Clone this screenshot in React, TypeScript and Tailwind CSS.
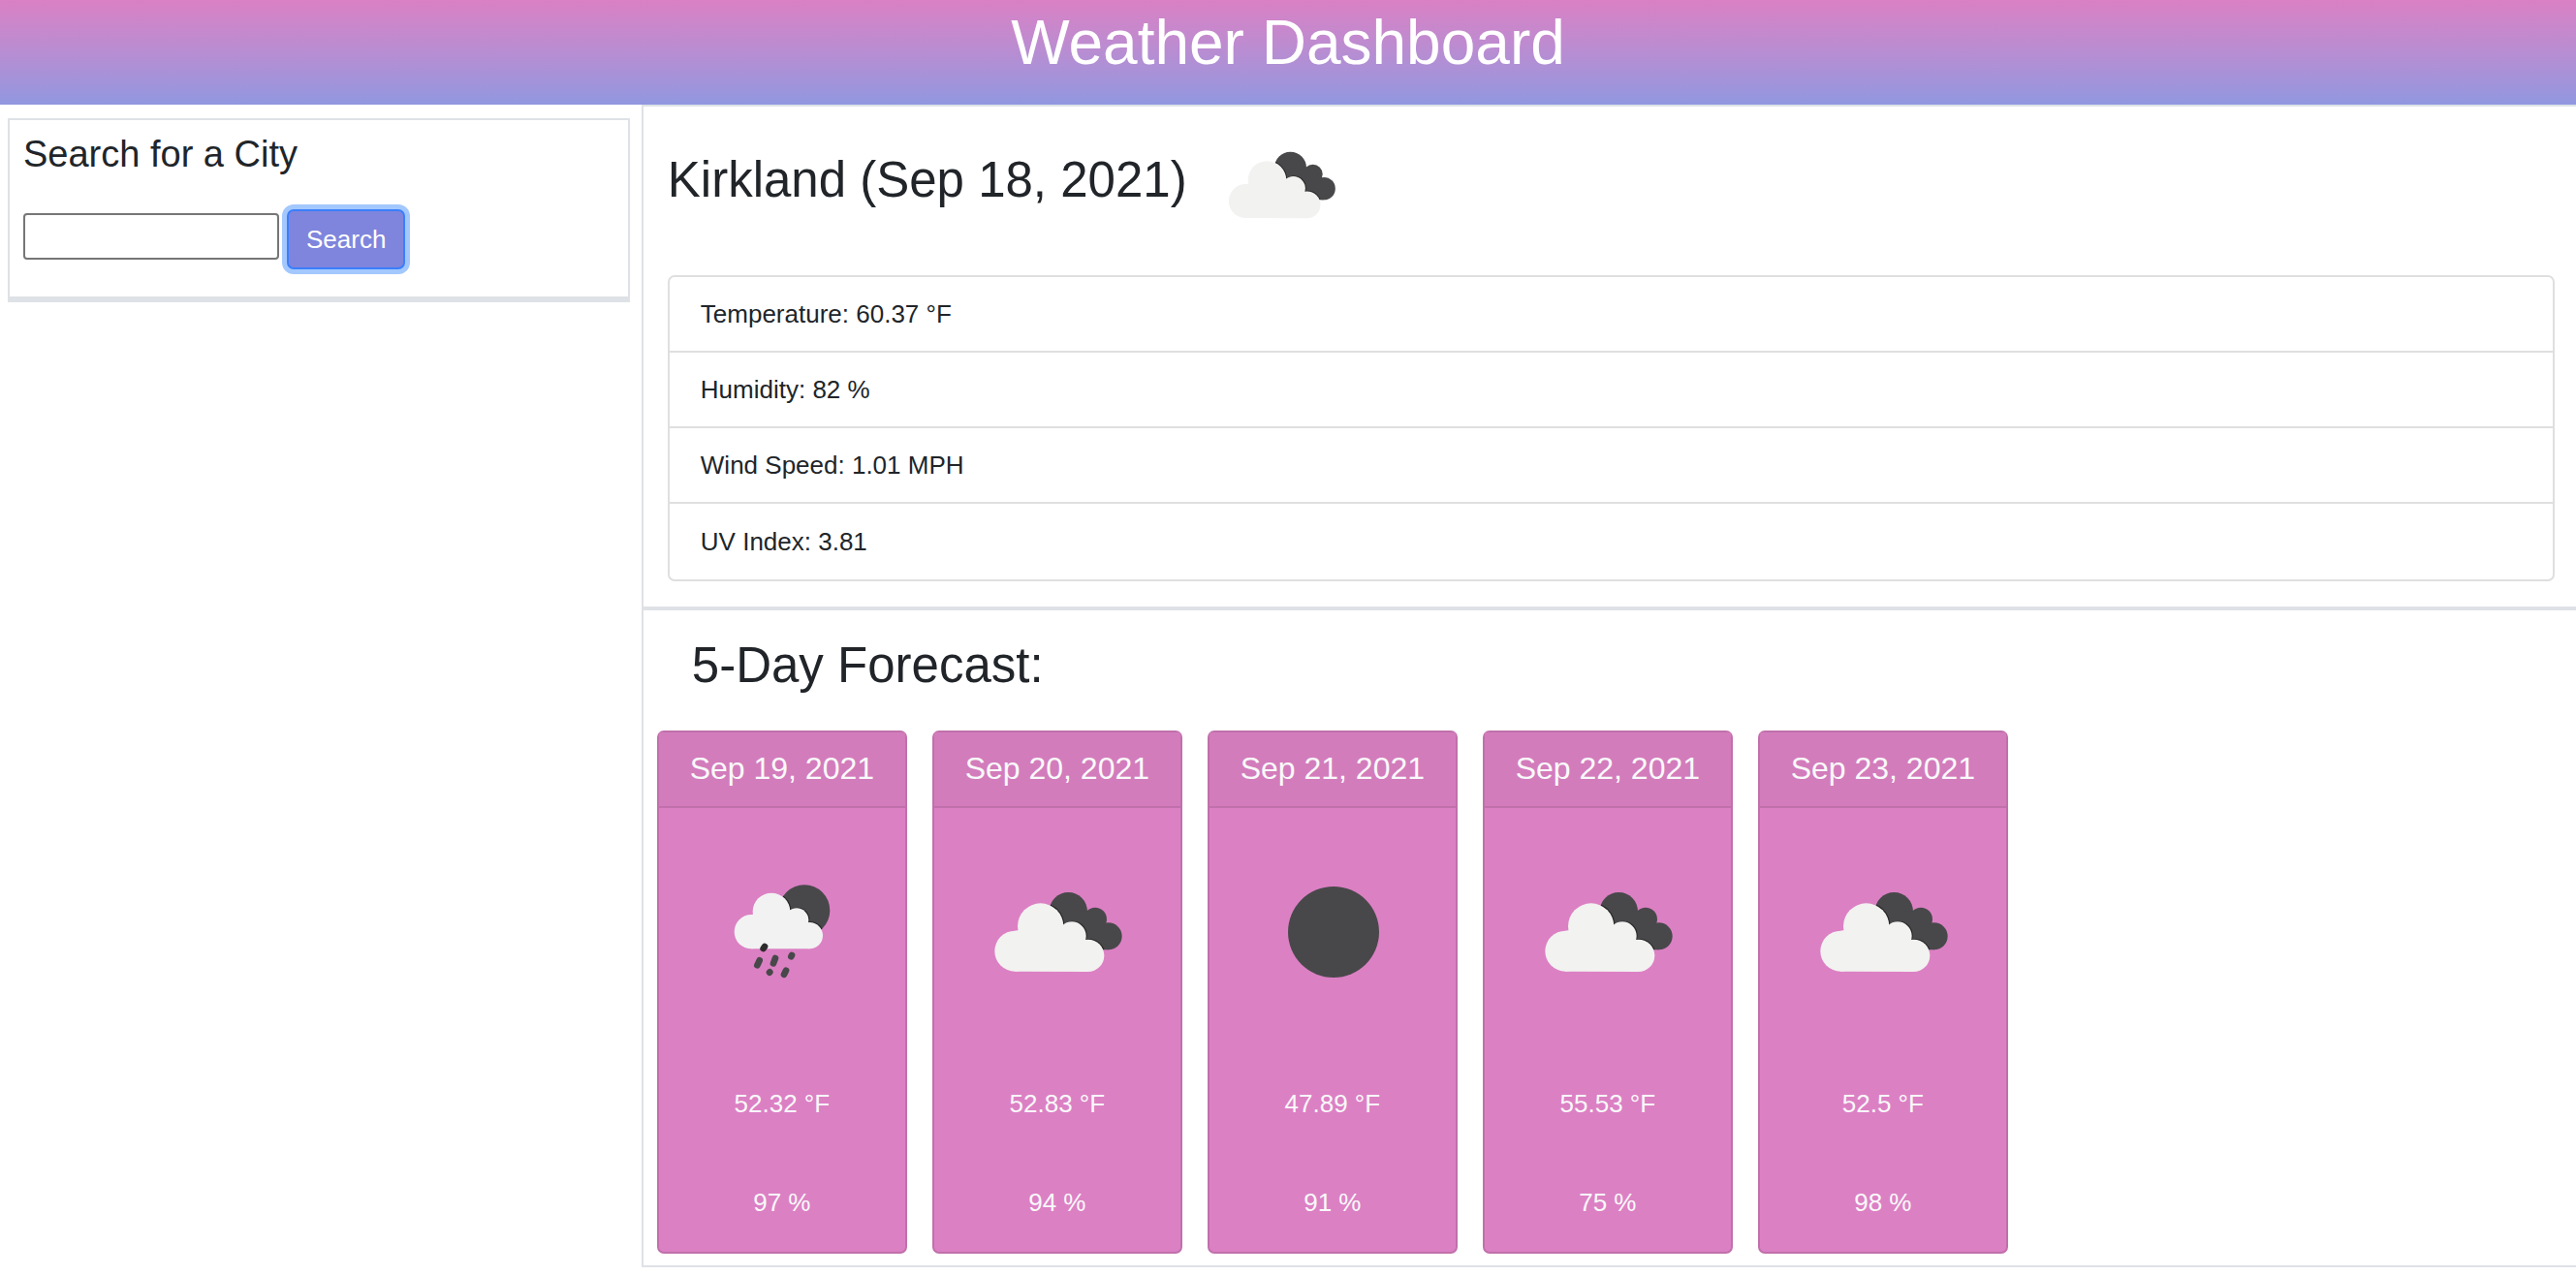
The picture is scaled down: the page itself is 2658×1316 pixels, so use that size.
import { useId, type FormEvent } from "react";

type Sky = "rain" | "clouds" | "clear";

const conditions = [
  "Temperature: 60.37 °F",
  "Humidity: 82 %",
  "Wind Speed: 1.01 MPH",
  "UV Index: 3.81",
];

const forecast: { date: string; sky: Sky; temp: string; humidity: string }[] = [
  { date: "Sep 19, 2021", sky: "rain", temp: "52.32 °F", humidity: "97 %" },
  { date: "Sep 20, 2021", sky: "clouds", temp: "52.83 °F", humidity: "94 %" },
  { date: "Sep 21, 2021", sky: "clear", temp: "47.89 °F", humidity: "91 %" },
  { date: "Sep 22, 2021", sky: "clouds", temp: "55.53 °F", humidity: "75 %" },
  { date: "Sep 23, 2021", sky: "clouds", temp: "52.5 °F", humidity: "98 %" },
];

function BrokenClouds({ className }: { className: string }) {
  const id = useId();
  const front = (
    <>
      <circle cx="142" cy="275" r="63" />
      <circle cx="221" cy="198" r="71" />
      <circle cx="318" cy="228" r="44" />
      <circle cx="368" cy="289" r="50" />
      <path d="M142 338 L142 212 L221 198 L318 228 L368 289 L368 339 Z" />
    </>
  );
  const back = (
    <>
      <circle cx="307" cy="152" r="59" />
      <circle cx="390" cy="176" r="36" />
      <circle cx="431" cy="229" r="42" />
      <path d="M307 152 L390 150 L431 229 L431 271 L380 271 L270 200 Z" />
    </>
  );
  return (
    <svg viewBox="33 -24 480 480" className={className} role="img" aria-label="Broken clouds">
      <clipPath id={id}>{back}</clipPath>
      <g fill="#48484a">{back}</g>
      <g clipPath={`url(#${id})`}>
        <g fill="#262627" transform="translate(3 -2)">{front}</g>
      </g>
      <g fill="#f2f2f0">{front}</g>
    </svg>
  );
}

function RainShowers({ className }: { className: string }) {
  const id = useId();
  const cloud = (
    <>
      <circle cx="106" cy="215" r="53" />
      <circle cx="168" cy="153" r="58" />
      <circle cx="246" cy="179" r="37" />
      <circle cx="286" cy="227" r="41" />
      <path d="M106 268 L106 162 L168 153 L246 179 L286 227 L286 268 Z" />
    </>
  );
  return (
    <svg viewBox="-39 -24 480 480" className={className} role="img" aria-label="Rain showers">
      <clipPath id={id}>
        <circle cx="270" cy="149" r="79" />
      </clipPath>
      <circle cx="270" cy="149" r="79" fill="#48484a" />
      <g clipPath={`url(#${id})`}>
        <g fill="#262627" transform="translate(3 -2)">{cloud}</g>
      </g>
      <g fill="#f2f2f2">{cloud}</g>
      <g stroke="#48484a" strokeWidth="20" strokeLinecap="round">
        <path d="M147 261 L143 267" stroke="#2c2c2d" />
        <path d="M131 304 L124 319" />
        <path d="M180 297 L174 313" />
        <path d="M231 288 L229 292" />
        <path d="M163 340 L162 341" />
        <path d="M213 335 L207 347" />
      </g>
    </svg>
  );
}

function ClearNight({ className }: { className: string }) {
  return (
    <svg viewBox="0 0 160 160" className={className} role="img" aria-label="Clear sky">
      <circle cx="81" cy="80" r="47" fill="#48484a" />
    </svg>
  );
}

const skyIcons = { rain: RainShowers, clouds: BrokenClouds, clear: ClearNight };

export default function App() {
  return (
    <div className="min-h-screen bg-white font-['Liberation_Sans',Arial,sans-serif] text-[26px] leading-[38px] text-[#212529]">
      <header className="bg-linear-to-b from-[#da80c4] to-[#9097e0] pt-1 pb-6 text-center">
        <h1 className="text-[64px] leading-[80px] text-white">Weather Dashboard</h1>
      </header>

      <div className="grid grid-cols-[24.9%_1fr] items-start">
        <aside className="mt-[14px] mr-3 ml-2 border-2 border-b-6 border-[#dee2e6] px-[14px] pt-3 pb-7">
          <form onSubmit={(e: FormEvent) => e.preventDefault()}>
            <h2 className="mb-[34px] text-[38px] leading-[46px]">
              <label htmlFor="city">Search for a City</label>
            </h2>
            <div className="flex items-start gap-2">
              <input
                id="city"
                type="text"
                className="mt-1 h-12 w-[264px] rounded-[4px] border-2 border-[#767676] bg-white px-1 outline-none"
              />
              <button
                type="submit"
                className="rounded-[7px] border-2 border-[#3a7ffa] bg-[#7f85dc] px-[18px] py-[10px] text-white ring-5 ring-[#a3c8fd]"
              >
                Search
              </button>
            </div>
          </form>
        </aside>

        <main className="border-2 border-r-0 border-[#dee2e6]">
          <section className="border-b-4 border-[#dee2e6] pt-[14px] pr-[22px] pb-[26px] pl-[25px]">
            <div className="mb-[26px] flex items-center gap-[30px]">
              <h2 className="pb-[10px] text-[51px] leading-[62px]">Kirkland (Sep 18, 2021)</h2>
              <BrokenClouds className="size-[134px]" />
            </div>
            <ul className="grid min-h-[316px] auto-rows-fr divide-y-2 divide-[#dfdfdf] rounded-[7px] border-2 border-[#dfdfdf]">
              {conditions.map((line) => (
                <li key={line} className="flex items-center px-8">
                  {line}
                </li>
              ))}
            </ul>
          </section>

          <section className="pt-[26px] pb-3 pl-[14px]">
            <h2 className="mb-9 pl-9 text-[51px] leading-[62px]">5-Day Forecast:</h2>
            <div className="flex flex-wrap gap-[26px]">
              {forecast.map(({ date, sky, temp, humidity }) => {
                const Icon = skyIcons[sky];
                return (
                  <article
                    key={date}
                    className="w-[258px] rounded-[7px] border-2 border-[#c070ab] bg-[#dc80c4] text-center text-[#f8f9fa]"
                  >
                    <h3 className="border-b-2 border-[#c070ab] bg-[#d37cbc] pt-[17px] pb-[19px] text-[32px] leading-10">
                      {date}
                    </h3>
                    <div className="flex flex-col items-center pt-12 pb-8">
                      <Icon className="mb-[78px] size-40" />
                      <p className="mb-16">{temp}</p>
                      <p>{humidity}</p>
                    </div>
                  </article>
                );
              })}
            </div>
          </section>
        </main>
      </div>
    </div>
  );
}
